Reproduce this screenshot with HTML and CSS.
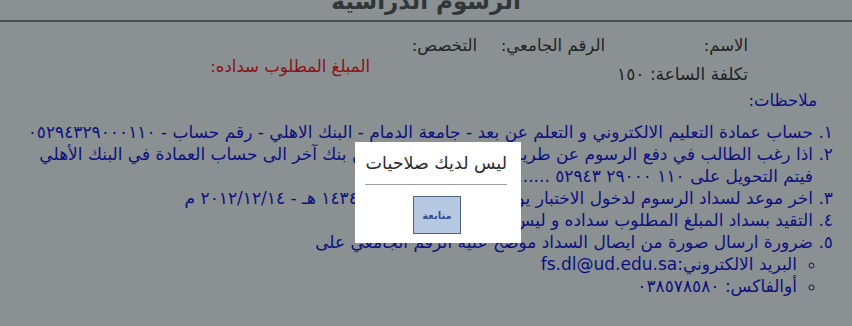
FILE: index.html
```html
<!DOCTYPE html>
<html lang="ar" dir="rtl">
<head>
<meta charset="utf-8">
<title>الرسوم الدراسية</title>
<link rel="stylesheet" href="styles.css">
</head>
<body>
<div class="page">
  <h2 class="title">الرسوم الدراسية</h2>
  <div class="content">
    <div class="info-row">
      <div class="cell cell-name">الاسم:</div>
      <div class="cell cell-id">الرقم الجامعي:</div>
      <div class="cell cell-major">التخصص:</div>
    </div>
    <div class="info-row info-row2">
      <div class="cell cell-cost">تكلفة الساعة: ١٥٠</div>
      <div class="cell cell-due">المبلغ المطلوب سداده:</div>
    </div>
    <div class="notes-title">ملاحظات:</div>
    <ol class="notes">
      <li>حساب عمادة التعليم الالكتروني و التعلم عن بعد - جامعة الدمام - البنك الاهلي - رقم حساب - ٠٥٢٩٤٣٢٩٠٠٠١١٠</li>
      <li>اذا رغب الطالب في دفع الرسوم عن طريق التحويل المصرفي من بنك آخر الى حساب العمادة في البنك الأهلي فيتم التحويل على ١١٠ ٢٩٠٠٠ ٥٢٩٤٣ ...... ١٨١ A</li>
      <li>اخر موعد لسداد الرسوم لدخول الاختبار يوم السبت الموافق ١٤٣٤/٢/١ هـ - ٢٠١٢/١٢/١٤ م</li>
      <li>التقيد بسداد المبلغ المطلوب سداده و ليس أقل منه</li>
      <li>ضرورة ارسال صورة من ايصال السداد موضح عليه الرقم الجامعي على
        <ul class="contacts">
          <li>البريد الالكتروني:fs.dl@ud.edu.sa</li>
          <li>أوالفاكس: ٠٣٨٥٧٨٥٨٠</li>
        </ul>
      </li>
    </ol>
  </div>
</div>
<div class="overlay"></div>
<div class="dialog">
  <div class="dialog-msg">ليس لديك صلاحيات</div>
  <hr class="dialog-rule">
  <div class="dialog-actions">
    <button class="dialog-btn">متابعة</button>
  </div>
</div>
</body>
</html>
```

FILE: styles.css
```css
html, body {
  margin: 0;
  padding: 0;
  background: #ffffff;
}
body {
  direction: rtl;
  font-family: "DejaVu Sans", sans-serif;
  font-size: 16.5px;
  color: #262626;
  height: 326px;
  overflow: hidden;
}
.page {
  width: 852px;
}
.title {
  margin: -14px 0 0 0;
  padding: 0 0 4px 0;
  text-align: center;
  font-size: 23px;
  font-weight: bold;
  color: #4a4a4a;
  line-height: 30px;
  border-bottom: 2px solid #7a7a7a;
}
.content {
  padding: 0 20px 0 20px;
}
.info-row {
  display: flex;
  align-items: flex-start;
}
.info-row:first-child {
  margin-top: 14px;
  padding-right: 84px;
}
.cell {
  line-height: 20px;
}
.cell-name {
  width: 143px;
}
.cell-id {
  width: 128px;
}
.info-row2 {
  padding-right: 84px;
  margin-top: 1px;
}
.cell-cost {
  width: 378px;
  margin-top: 7px;
  font-size: 17px;
}
.cell-due {
  color: #ff0000;
}
.notes-title {
  color: #0000d8;
  margin: 7px 15px 0 0;
  line-height: 20px;
}
.notes {
  margin: 10px 0 0 0;
  padding: 0 19px 0 0;
  list-style-type: arabic-indic;
  color: #0000d8;
  font-size: 17px;
}
.notes > li {
  line-height: 22px;
}
.contacts {
  margin: 0;
  padding: 0 16px 0 0;
  list-style-type: circle;
}
.contacts li {
  line-height: 22px;
}
.overlay {
  position: fixed;
  inset: 0;
  background: rgba(23, 33, 37, 0.5);
}
.dialog {
  position: absolute;
  left: 355px;
  top: 142px;
  width: 166px;
  height: 101px;
  box-sizing: border-box;
  background: #ffffff;
  padding: 10px 14px 0 10px;
  display: flex;
  flex-direction: column;
}
.dialog-msg {
  font-size: 17.5px;
  line-height: 22px;
  color: #2b2b2b;
  white-space: nowrap;
}
.dialog-rule {
  margin: 10px 0 0 0;
  border: 0;
  border-top: 1px solid #a0a0a0;
  height: 0;
}
.dialog-actions {
  display: flex;
  justify-content: center;
  margin-top: 11px;
  padding-left: 2px;
}
.dialog-btn {
  width: 48px;
  height: 38px;
  box-sizing: border-box;
  background: #b7c9e2;
  border: 1px solid #4d6380;
  color: #33508f;
  font-family: "DejaVu Sans", sans-serif;
  font-size: 10px;
  font-weight: bold;
  padding: 0;
}
```
